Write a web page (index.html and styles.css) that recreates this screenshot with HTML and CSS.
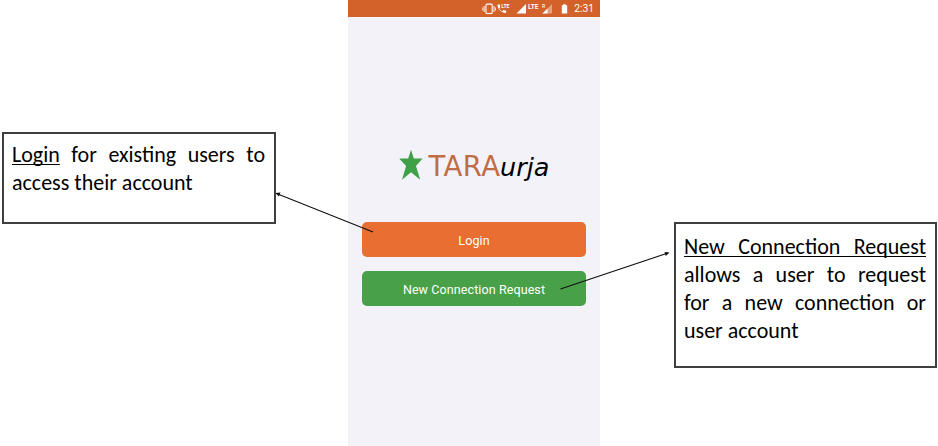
FILE: index.html
```html
<!DOCTYPE html>
<html lang="en">
<head>
<meta charset="utf-8">
<title>TARAurja</title>
<link rel="stylesheet" href="styles.css">
</head>
<body>
<main class="stage">
  <aside class="note note-login"><p class="line"><u>Login</u> for existing users to</p><p class="line last">access their account</p></aside>
  <section class="phone">
    <header class="status">
      <svg class="status-icons" width="92" height="17" viewBox="0 0 92 17" fill="#fff">
        <rect x="4" y="4.100" width="6.200" height="9.400" rx="1" fill="none" stroke="#fff" stroke-width="1.1"/>
        <path d="M2.200 6v6M12 6v6M.8 7.500v3M13.400 7.500v3" stroke="#fff" stroke-width=".9"/>
        <path d="M15.500 4.600h2.200l.5 2.600-1.100 1.100a8 8 0 0 0 3.100 3.100l1.300-1.300 2.600.7v2.300C19.600 13.100 15.500 9.300 15.500 4.600z"/>
        <text x="19.300" y="7.500" class="tiny">LTE</text>
        <path d="M34.500 13.400h9.500v-9.500z"/>
        <text x="46" y="9" class="lte">LTE</text>
        <path d="M60.500 13.400h9.500v-9.500z" opacity=".4"/>
        <path d="M60.500 13.400h5v-5z"/>
        <text x="60" y="8" class="tiny" opacity=".8">R</text>
        <path d="M79.800 5.200h1.400v-1h2.600v1h1.400v8.400h-5.400z"/>
      </svg>
      <span class="time">2:31</span>
    </header>
    <h1 class="logo">
      <svg class="star" width="24" height="32" viewBox="0 0 24 32"><path d="M12 .8L14.800 9.600H23.600L17 17 21.200 30.800 12 23.200 3 30.800 7.100 17 .2 9.600H9.200z" fill="#3fa147"/></svg>
      <span class="tara">TARA</span><span class="urja">urja</span>
    </h1>
    <button class="btn orange">Login</button>
    <button class="btn green">New Connection Request</button>
  </section>
  <aside class="note note-request"><p class="line"><u>New Connection Request</u></p><p class="line">allows a user to request</p><p class="line">for a new connection or</p><p class="line last">user account</p></aside>
</main>
<svg class="arrows" width="938" height="446" viewBox="0 0 938 446" stroke="#111" stroke-width="1.100">
  <path d="M373 232L276.500 193.500M560.500 289L668 253"/>
  <path d="M275.500 193l5-.4-1.600 4zM669.500 252.400l-5-.5 1.300 4z" fill="#111" stroke="none"/>
</svg>
</body>
</html>
```

FILE: styles.css
```css
* { box-sizing: border-box; }
body { margin: 0; background: #fff; width: 938px; height: 446px; overflow: hidden; position: relative; }
.stage { display: grid; grid-template-columns: 274px 252px 263px; column-gap: 73px; padding-left: 2px; height: 446px; align-items: start; }
.note { border: 2px solid #3f3f3f; color: #000; font: 22px/28px Carlito, Lato, sans-serif; }
.note-login { margin-top: 132px; height: 92px; padding: 7px 9px 0 8px; }
.note-request { margin-top: 222px; height: 146px; padding: 9px 9px 0 8px; }
.line { margin: 0; text-align: justify; text-align-last: justify; white-space: nowrap; }
.last { text-align-last: left; }
.note u { text-decoration-thickness: 1px; text-underline-offset: 2px; text-decoration-skip-ink: none; }
.phone { height: 446px; width: 252px; margin-left: -1px; background: #f3f2f9; display: flex; flex-direction: column; align-items: center; }
.status { width: 100%; height: 17px; background: #d2622a; display: flex; justify-content: flex-end; padding-right: 6px; color: #fff; font: 10.300px/18px Roboto, sans-serif; }
.status-icons { margin-right: 0; }
.tiny { font: bold 5px Roboto, sans-serif; }
.lte { font: bold 6.500px Roboto, sans-serif; }
.logo { display: flex; margin: 131.500px 0 0; width: 151px; height: 40px; font: 27.500px/35px "DejaVu Sans", sans-serif; }
.star { margin-right: 6px; flex: none; }
.tara { color: #c06c45; letter-spacing: .4px; width: 71.500px; }
.urja { color: #000; font-style: italic; font-size: 25.500px; line-height: 37px; }
.btn { width: 224px; height: 35px; border: 0; border-radius: 5px; padding: 2px 0 0; color: #fff; font: 12.500px/33px Roboto, sans-serif; letter-spacing: .1px; }
.orange { background: #e86e32; margin-top: 33.500px; }
.green { background: #48a048; margin-top: 14px; }
.arrows { position: absolute; left: 0; top: 0; }
```
